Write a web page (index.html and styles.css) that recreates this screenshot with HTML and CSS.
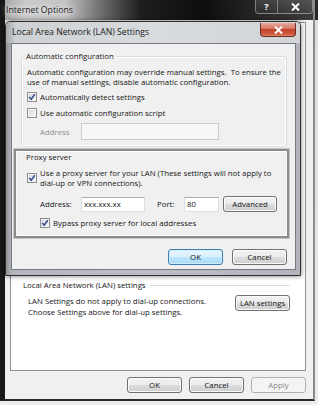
FILE: index.html
```html
<!DOCTYPE html>
<html lang="en">
<head>
    <meta charset="UTF-8">
    <meta name="viewport" content="width=device-width, initial-scale=1.0">
    <title>Internet Options</title>
    <link rel="stylesheet" href="styles.css">
</head>
<body>

    <div class="window">
        <div class="titlebar">
            <span class="title">Internet Options</span>
            <div class="caption-buttons">
                <span class="cap help">?</span>
                <span class="cap close">
                    <svg width="9" height="8" viewBox="0 0 9 8"><path d="M1 0.5 L8 7.5 M8 0.5 L1 7.5" stroke="#fff" stroke-width="2"/></svg>
                </span>
            </div>
        </div>

        <div class="client">
            <div class="panel">
                <div class="section-head">
                    <span>Local Area Network (LAN) settings</span>
                    <span class="rule"></span>
                </div>
                <div class="lan-row">
                    <p>LAN Settings do not apply to dial-up connections.<br>Choose Settings above for dial-up settings.</p>
                    <button class="btn lan-btn">LAN settings</button>
                </div>
            </div>
            <div class="button-row">
                <button class="btn">OK</button>
                <button class="btn">Cancel</button>
                <button class="btn" disabled>Apply</button>
            </div>
        </div>

        <div class="dialog">
            <div class="dialog-titlebar">
                <span class="dialog-title">Local Area Network (LAN) Settings</span>
                <span class="red-close">
                    <svg width="9" height="8" viewBox="0 0 9 8"><path d="M1 0.5 L8 7.5 M8 0.5 L1 7.5" stroke="#fff" stroke-width="2"/></svg>
                </span>
            </div>
            <div class="dialog-client">
                <fieldset class="group">
                    <legend>Automatic configuration</legend>
                    <p class="desc">Automatic configuration may override manual settings.&nbsp; To ensure the<br>use of manual settings, disable automatic configuration.</p>
                    <label class="check-row">
                        <span class="checkbox checked"><svg width="8" height="8" viewBox="0 0 8 8"><path d="M1.2 4 L3.2 6.3 L6.8 1.2" stroke="#3d4f8c" stroke-width="1.6" fill="none"/></svg></span>
                        Automatically detect settings
                    </label>
                    <label class="check-row">
                        <span class="checkbox"></span>
                        Use automatic configuration script
                    </label>
                    <div class="field-row indent">
                        <span class="field-label disabled">Address</span>
                        <span class="input wide disabled"></span>
                    </div>
                </fieldset>

                <div class="proxy">
                    <div class="proxy-title">Proxy server</div>
                    <label class="check-row multi">
                        <span class="checkbox checked"><svg width="8" height="8" viewBox="0 0 8 8"><path d="M1.2 4 L3.2 6.3 L6.8 1.2" stroke="#3d4f8c" stroke-width="1.6" fill="none"/></svg></span>
                        <span>Use a proxy server for your LAN (These settings will not apply to<br>dial-up or VPN connections).</span>
                    </label>
                    <div class="field-row indent proxy-fields">
                        <span class="field-label">Address:</span>
                        <span class="input addr">xxx.xxx.xx</span>
                        <span class="field-label port-label">Port:</span>
                        <span class="input port">80</span>
                        <button class="btn advanced">Advanced</button>
                    </div>
                    <label class="check-row indent bypass">
                        <span class="checkbox checked"><svg width="8" height="8" viewBox="0 0 8 8"><path d="M1.2 4 L3.2 6.3 L6.8 1.2" stroke="#3d4f8c" stroke-width="1.6" fill="none"/></svg></span>
                        Bypass proxy server for local addresses
                    </label>
                </div>

                <div class="dialog-buttons">
                    <button class="btn default">OK</button>
                    <button class="btn">Cancel</button>
                </div>
            </div>
        </div>
    </div>

</body>
</html>
```

FILE: styles.css
```css
* {
    box-sizing: border-box;
}
body {
    margin: 0;
    width: 318px;
    height: 405px;
    overflow: hidden;
    background: linear-gradient(#262626 0, #262626 20px, #dedede 20px, #ececec 100%);
    font-family: "Open Sans", "Segoe UI", sans-serif;
    font-size: 7.8px;
    line-height: 10px;
    color: #151515;
}
.window {
    position: relative;
    width: 315px;
    height: 401px;
    display: flex;
    flex-direction: column;
    border-left: 5px solid #181818;
    border-right: 2px solid #8a8a8a;
    border-bottom: 2px solid #2a2a2a;
    background: #f0f0f0;
}

/* outer aero title bar */
.titlebar {
    height: 20px;
    display: flex;
    align-items: flex-start;
    background: linear-gradient(90deg, #a9a9a9 0, #c9c9c9 20px, #c4c4c4 60px, #707070 95px, #1e1e1e 135px, #0e0e0e 200px, #262626 250px, #3c3c3c 100%);
}
.title {
    font-size: 8.7px;
    line-height: 20px;
    padding-left: 1px;
    color: #1d1d1d;
    text-shadow: 0 0 5px #fff, 0 0 8px #fff;
}
.caption-buttons {
    margin-left: auto;
    display: flex;
}
.cap {
    height: 14px;
    display: flex;
    align-items: center;
    justify-content: center;
    border: 1px solid rgba(255, 255, 255, 0.35);
    border-top: none;
    background: linear-gradient(rgba(255, 255, 255, 0.12), rgba(255, 255, 255, 0.04));
    color: #fff;
    font-weight: bold;
    font-size: 9px;
}
.cap.help {
    width: 23px;
    border-radius: 0 0 0 4px;
}
.cap.close {
    width: 35px;
    border-left: none;
    border-radius: 0 0 4px 0;
}

/* outer client */
.client {
    flex: 1;
    display: flex;
    flex-direction: column;
    padding: 2px 7px 6px 5px;
}
.panel {
    flex: 1;
    background: #fff;
    border: 1px solid #8e9196;
    padding: 257px 15px 0 12px;
}
.section-head {
    display: flex;
    align-items: center;
    line-height: 11px;
}
.rule {
    flex: 1;
    height: 1px;
    margin-left: 5px;
    background: #d5dfe5;
}
.lan-row {
    display: flex;
    align-items: flex-start;
    justify-content: space-between;
    margin-top: 4px;
    padding-left: 5px;
}
.lan-row p {
    margin: 1px 0 0;
    line-height: 11px;
}
.lan-btn {
    width: 72px;
    height: 14px;
}
.button-row {
    display: flex;
    justify-content: flex-end;
    gap: 7px;
    margin-top: 6px;
}

/* buttons */
.btn {
    font: inherit;
    width: 55px;
    height: 16px;
    padding: 0;
    border: 1px solid #707070;
    border-radius: 3px;
    background: linear-gradient(#f2f2f2 0%, #ebebeb 50%, #dddddd 50%, #cfcfcf 100%);
    box-shadow: inset 0 0 0 1px rgba(255, 255, 255, 0.85);
    color: #151515;
}
.btn:disabled {
    border-color: #adb2b5;
    background: #f4f4f4;
    color: #8a8a8a;
    box-shadow: none;
}
.btn.default {
    border-color: #3c7fb1;
    background: linear-gradient(#eaf6fd 0%, #d9f0fc 50%, #bee6fd 50%, #a7d9f5 100%);
    box-shadow: inset 0 0 0 1px #d0ecfb;
}

/* LAN settings dialog */
.dialog {
    position: absolute;
    left: 0;
    top: 21px;
    width: 296px;
    height: 255px;
    display: flex;
    flex-direction: column;
    padding: 0 4px 5px 5px;
    border: 1px solid #2e2e2e;
    border-radius: 5px 5px 0 0;
    background: linear-gradient(90deg, #8f9397 0, #b3b7bb 6px, #bcc0c4 50%, #b1b5b9 100%);
    box-shadow: 0 0 5px rgba(0, 0, 0, 0.55);
}
.dialog-titlebar {
    height: 21px;
    display: flex;
    align-items: flex-start;
    margin: 0 -4px 0 -5px;
    padding: 0 4px 0 5px;
    border-radius: 4px 4px 0 0;
    background: linear-gradient(90deg, #a3a7ab 0, #cdd1d4 10px, #d9dcdf 50%, #d2d5d8 100%);
}
.dialog-title {
    font-size: 8.7px;
    line-height: 21px;
    padding-left: 1px;
    color: #1a1a1a;
}
.red-close {
    margin: 1px 0 0 auto;
    width: 36px;
    height: 14px;
    display: flex;
    align-items: center;
    justify-content: center;
    border: 1px solid #6b2c22;
    border-top: none;
    border-radius: 0 0 4px 4px;
    background: linear-gradient(#e9a99a 0%, #d47561 45%, #c2422c 50%, #cf5a3f 85%, #e08a6e 100%);
}
.dialog-client {
    flex: 1;
    display: flex;
    flex-direction: column;
    border: 1px solid #767a7e;
    background: #f0f0f0;
}
.group {
    margin: 7px 8px 0 9px;
    padding: 5px 5px 6px;
    border: 1px solid #d5dfe5;
    border-radius: 3px;
    box-shadow: inset 0 0 0 1px #fff;
}
.group legend {
    margin-left: -3px;
    padding: 0 2px;
    line-height: 11px;
}
.desc {
    margin: 0;
}
.check-row {
    display: flex;
    align-items: center;
    gap: 3px;
    height: 12px;
    margin-top: 4px;
}
.check-row.multi {
    height: auto;
    margin-top: 5px;
}
.checkbox {
    width: 10px;
    height: 10px;
    flex: none;
    display: flex;
    align-items: center;
    justify-content: center;
    border: 1px solid #8f8f8f;
    background: linear-gradient(135deg, #cfd6e2, #fbfbfb);
    box-shadow: inset 0 0 0 1px #f4f4f4;
}
.indent {
    margin-left: 13px;
}
.field-row {
    display: flex;
    align-items: center;
    margin-top: 4px;
}
.field-label {
    width: 41px;
}
.disabled {
    color: #8e8e8e;
}
.input {
    height: 17px;
    padding-left: 2px;
    display: flex;
    align-items: center;
    border: 1px solid #dbdfe6;
    border-top-color: #abadb3;
    background: #fff;
}
.input.wide {
    width: 138px;
}
.input.disabled {
    border-color: #c9cdd1;
    background: #f7f7f7;
}
.proxy {
    margin: 2px 6px 0 2px;
    padding: 1px 6px 7px 11px;
    border: 2px solid #8c8c8c;
    box-shadow: 0 0 0 1px #c6c6c6, inset 0 0 0 1px #fafafa;
}
.proxy-title {
    line-height: 11px;
    margin-left: -1px;
}
.proxy-fields {
    margin-top: 8px;
}
.proxy-fields .input {
    height: 15px;
}
.input.addr {
    width: 64px;
}
.port-label {
    width: 27px;
    margin-left: 12px;
}
.input.port {
    width: 35px;
}
.advanced {
    margin-left: 4px;
    width: 54px;
}
.bypass {
    margin-top: 5px;
}
.dialog-buttons {
    display: flex;
    justify-content: flex-end;
    gap: 9px;
    margin: 11px 8px 0 0;
}
```
